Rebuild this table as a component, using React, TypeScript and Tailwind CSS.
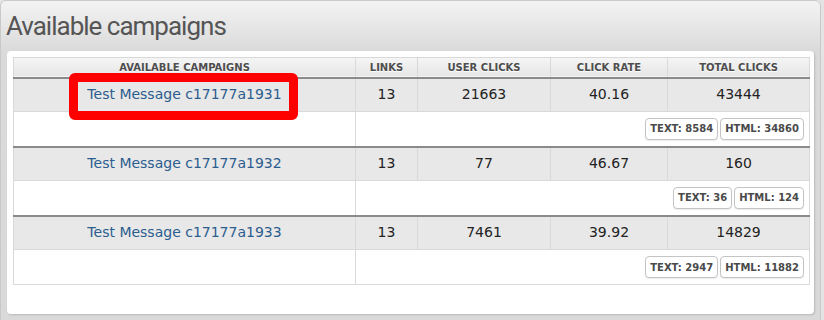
import React from "react";

type Campaign = {
  name: string;
  links: number;
  userClicks: number;
  clickRate: string;
  totalClicks: number;
  text: number;
  html: number;
};

const campaigns: Campaign[] = [
  { name: "Test Message c17177a1931", links: 13, userClicks: 21663, clickRate: "40.16", totalClicks: 43444, text: 8584, html: 34860 },
  { name: "Test Message c17177a1932", links: 13, userClicks: 77, clickRate: "46.67", totalClicks: 160, text: 36, html: 124 },
  { name: "Test Message c17177a1933", links: 13, userClicks: 7461, clickRate: "39.92", totalClicks: 14829, text: 2947, html: 11882 },
];

const headers = ["Available campaigns", "Links", "User clicks", "Click rate", "Total clicks"];

const Badge = ({ children }: { children: React.ReactNode }) => (
  <span className="inline-flex h-[22px] items-center rounded-[4px] border border-[#c4c4c4] bg-white px-[4px] text-[10px] font-bold text-[#4a4a4a] shadow-[0_1px_1px_rgba(0,0,0,0.08)]">
    {children}
  </span>
);

const CampaignRows = ({ c, last }: { c: Campaign; last: boolean }) => (
  <>
    <tr className="h-[34px] bg-[#e8e8e8] text-[14px] text-[#222]">
      <td className="border border-[#d9d9d9] text-center">
        <a className="text-[#2b5d8f]">{c.name}</a>
      </td>
      <td className="border border-[#d9d9d9] text-center">{c.links}</td>
      <td className="border border-[#d9d9d9] text-center">{c.userClicks}</td>
      <td className="border border-[#d9d9d9] text-center">{c.clickRate}</td>
      <td className="border border-[#d9d9d9] text-center">{c.totalClicks}</td>
    </tr>
    <tr className={last ? "h-[35px] bg-white" : "h-[35px] border-b-[2px] border-b-[#8a8a8a] bg-white"}>
      <td className="border border-[#d9d9d9]"></td>
      <td colSpan={4} className="border border-[#d9d9d9] pr-[5px] text-right">
        <div className="flex justify-end gap-[2px]">
          <Badge>TEXT: {c.text}</Badge>
          <Badge>HTML: {c.html}</Badge>
        </div>
      </td>
    </tr>
  </>
);

export default function App() {
  return (
    <div className="relative h-[320px] w-[824px] overflow-hidden bg-[#e4e4e4] font-['DejaVu_Sans',sans-serif]">
      <div className="ml-0 mr-[3px] h-[340px] rounded-[6px] border border-[#c9c9c9] bg-[linear-gradient(#f3f3f3,#dadada_50px,#d9d9d9)] px-[6px]">
        <h1 className="-ml-[1px] h-[50px] pt-[8px] font-['Roboto',sans-serif] text-[26px] leading-[34px] tracking-[-1px] text-[#555]">
          Available campaigns
        </h1>
        <div className="h-[263px] rounded-[4px] bg-white px-[6px] pt-[6px] shadow-[1px_1px_2px_rgba(0,0,0,0.15)]">
          <table className="w-[796px] table-fixed border-collapse border border-[#d9d9d9]">
            <colgroup>
              <col className="w-[342px]" />
              <col className="w-[62px]" />
              <col className="w-[133px]" />
              <col className="w-[117px]" />
              <col className="w-[142px]" />
            </colgroup>
            <thead>
              <tr className="h-[20px] border-b-[2px] border-b-[#8a8a8a] bg-[linear-gradient(#f5f5f5,#e6e6e6)]">
                {headers.map((h) => (
                  <th
                    key={h}
                    className="border-x border-[#d9d9d9] text-center text-[10px] font-bold uppercase text-[#4d4d4d] [text-shadow:0_1px_0_#fff]"
                  >
                    {h}
                  </th>
                ))}
              </tr>
            </thead>
            <tbody>
              {campaigns.map((c, i) => (
                <CampaignRows key={c.name} c={c} last={i === campaigns.length - 1} />
              ))}
            </tbody>
          </table>
        </div>
      </div>
      {/* highlight drawn over the first campaign */}
      <div className="absolute left-[69px] top-[73px] h-[47px] w-[229px] rounded-[6px] border-[9px] border-[#ff0000]" />
    </div>
  );
}
